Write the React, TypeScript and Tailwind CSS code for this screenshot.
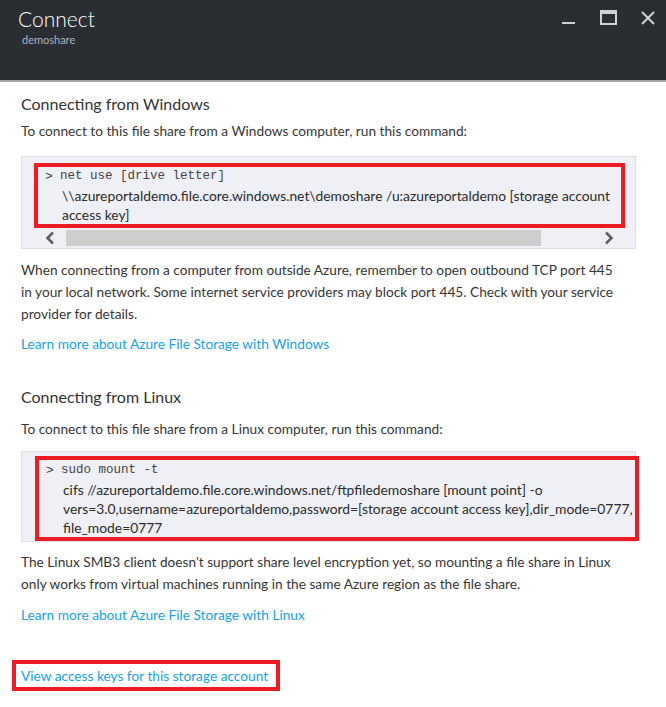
import React from 'react';

// Connect blade — "demoshare" file share connection instructions

const SANS = "font-['Lato','Open_Sans',sans-serif]";
const MONO = "font-['Liberation_Mono','DejaVu_Sans_Mono',monospace]";

function Chevron({ dir }: { dir: 'left' | 'right' }) {
  return (
    <svg width="10" height="14" viewBox="0 0 10 14" className="shrink-0">
      <polyline
        points={dir === 'left' ? '8,1.5 2.5,7 8,12.5' : '2,1.5 7.5,7 2,12.5'}
        fill="none"
        stroke="#5f5f5f"
        strokeWidth="2.6"
      />
    </svg>
  );
}

function HeaderControls() {
  return (
    <div className="flex items-start pt-[10px] pr-[11px]">
      <div className="mt-[12px] w-[13px] h-[2px] bg-[#cfd2d5]" />
      <div className="ml-[25px] w-[17px] h-[15px] border-2 border-t-4 border-[#cfd2d5]" />
      <svg width="14" height="14" viewBox="0 0 14 14" className="ml-[24px] mt-[1px]">
        <path d="M1 1 L13 13 M13 1 L1 13" stroke="#cfd2d5" strokeWidth="2" />
      </svg>
    </div>
  );
}

function Prompt({ children }: { children: React.ReactNode }) {
  return (
    <div className="flex leading-[19px] text-[13.85px] text-[#2b2b2b]">
      <span className={`${MONO} w-[22px] pl-[7px] text-[13px] text-[#444]`}>&gt;</span>
      <div className="flex-1 min-w-0">{children}</div>
    </div>
  );
}

export default function App() {
  return (
    <div className={`w-[666px] h-[707px] overflow-hidden bg-white ${SANS}`}>
      {/* Header */}
      <div className="h-[80px] bg-[#2a2e32] flex justify-between">
        <div className="pl-[18px] pt-[5px]">
          <div className="text-[21px] leading-[28px] font-light text-white">Connect</div>
          <div className="pl-[4px] text-[11px] leading-[14px] text-[#a9b6c2]">demoshare</div>
        </div>
        <HeaderControls />
      </div>
      <div className="h-[2px] bg-[#a3a3a3]" />

      <div className="px-[21px] text-[13.7px] leading-[22px] text-[#363636]">
        {/* Windows */}
        <div className="mt-[11px] text-[16px] text-[#333]">Connecting from Windows</div>
        <div className="mt-[5px] whitespace-nowrap">To connect to this file share from a Windows computer, run this command:</div>

        <div className="mt-[14px] w-[615px] border border-[#dedfe3] bg-[#eff0f5] pt-[6px] pl-[12px] pr-[10px]">
          <div className="border-4 border-[#ed1c24]">
            <Prompt>
              <div className={`${MONO} text-[12.5px] text-[#444]`}>net use [drive letter]</div>
              <div className="pl-[2px] whitespace-nowrap">\\azureportaldemo.file.core.windows.net\demoshare /u:azureportaldemo [storage account</div>
              <div className="pl-[2px]">access key]</div>
            </Prompt>
          </div>
          <div className="h-[20px] flex items-center">
            <div className="w-[32px] flex justify-center">
              <Chevron dir="left" />
            </div>
            <div className="w-[475px] h-[16px] bg-[#cdcdcd]" />
            <div className="flex-1" />
            <div className="w-[32px] flex justify-center">
              <Chevron dir="right" />
            </div>
          </div>
        </div>

        <div className="mt-[10px] whitespace-nowrap">
          When connecting from a computer from outside Azure, remember to open outbound TCP port 445
          <br />
          in your local network. Some internet service providers may block port 445. Check with your service
          <br />
          provider for details.
        </div>
        <div className="mt-[8px] text-[#17a3e3]">Learn more about Azure File Storage with Windows</div>

        {/* Linux */}
        <div className="mt-[31px] text-[16px] text-[#333]">Connecting from Linux</div>
        <div className="mt-[10px] whitespace-nowrap">To connect to this file share from a Linux computer, run this command:</div>

        <div className="mt-[11px] w-[615px] border border-[#dedfe3] bg-[#eff0f5] pt-[4px] pl-[13px]">
          <div className="w-[604px] border-4 border-[#ed1c24] pt-[1px]">
            <Prompt>
              <div className={`${MONO} text-[12.5px] text-[#444]`}>sudo mount -t</div>
              <div className="pl-[2px] whitespace-nowrap">cifs //azureportaldemo.file.core.windows.net/ftpfiledemoshare [mount point] -o</div>
              <div className="pl-[2px] whitespace-nowrap">vers=3.0,username=azureportaldemo,password=[storage account access key],dir_mode=0777,</div>
              <div className="pl-[2px]">file_mode=0777</div>
            </Prompt>
          </div>
        </div>

        <div className="mt-[9px] whitespace-nowrap">
          The Linux SMB3 client doesn't support share level encryption yet, so mounting a file share in Linux
          <br />
          only works from virtual machines running in the same Azure region as the file share.
        </div>
        <div className="mt-[9px] text-[#17a3e3]">Learn more about Azure File Storage with Linux</div>
      </div>

      <div className="mt-[34px] ml-[12px] w-[268px] border-4 border-[#ed1c24] pl-[5px] leading-[23px] text-[13.7px] text-[#17a3e3]">
        View access keys for this storage account
      </div>
    </div>
  );
}
